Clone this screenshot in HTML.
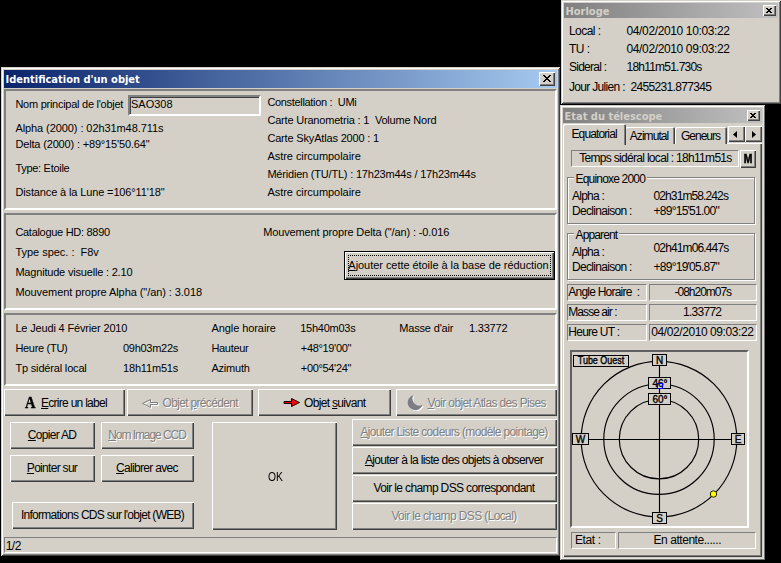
<!DOCTYPE html><html><head><meta charset="utf-8"><title>Identification d'un objet</title><style>
html,body{margin:0;padding:0;background:#000}
body{width:781px;height:563px;position:relative;overflow:hidden;font-family:"Liberation Sans",sans-serif;font-size:11px;color:#000}
div,span{position:absolute;box-sizing:border-box}
.win{background:#d4d0c8;box-shadow:inset 1px 1px 0 #d4d0c8,inset -1px -1px 0 #404040,inset 2px 2px 0 #fff,inset -2px -2px 0 #808080}
.cap{color:#fff;font-family:"DejaVu Sans Condensed","DejaVu Sans",sans-serif;font-weight:bold;font-size:11px;white-space:nowrap;overflow:hidden}
.cap span{left:1.5px;top:3px;line-height:13px}
.capa{background:linear-gradient(90deg,#0a246a,#a6caf0)}
.capi{background:linear-gradient(90deg,#808080,#c0c0c0);color:#d4d0c8}
.btn{background:#d4d0c8;box-shadow:inset 1px 1px 0 #fff,inset -1px -1px 0 #404040,inset -2px -2px 0 #808080;display:flex;align-items:center;justify-content:center;white-space:nowrap}
.btn span{position:static;flex:none}
.ms{font-size:12px;letter-spacing:-0.7px;padding-bottom:2px;padding-right:1px}
.dis{color:#808080;text-shadow:1px 1px 0 #fff}
.pnl{border:2px solid;border-color:#808080 #fff #fff #808080}
.low{border:1px solid;border-color:#808080 #fff #fff #808080}
.t{white-space:nowrap;line-height:13px}
.m,.md{white-space:nowrap;line-height:14px;font-size:12px}
.grp{border:1px solid #808080;box-shadow:1px 1px 0 #fff,inset 1px 1px 0 #fff}
.c{text-align:center}
</style></head><body>
<div class="win" style="left:1px;top:67px;width:559px;height:489px;"></div>
<div class="cap capa" style="left:4px;top:70px;width:553px;height:18px;"><span>Identification d'un objet</span></div>
<div class="btn" style="left:539px;top:72px;width:16px;height:14px;"><svg width="8" height="7" viewBox="0 0 8 7" shape-rendering="crispEdges" style="position:absolute;left:4px;top:3px"><path d="M0 0h2v1h1v1h2v-1h1v-1h2v1h-1v1h-1v1h-1v1h1v1h1v1h1v1h-2v-1h-1v-1h-2v1h-1v1h-2v-1h1v-1h1v-1h1v-1h-1v-1h-1v-1h-1z" fill="#000"/></svg></div>
<div class="pnl" style="left:4px;top:89px;width:553px;height:121px;"></div>
<div class="pnl" style="left:4px;top:213px;width:553px;height:97px;"></div>
<div class="pnl" style="left:4px;top:313px;width:553px;height:73px;"></div>
<span class="t" style="left:15.4px;top:98px;letter-spacing:-0.26px;">Nom principal de l'objet</span>
<div class="" style="left:128px;top:95px;width:133px;height:21px;border:2px solid;border-color:#808080 #fff #fff #808080;box-shadow:inset 1px 1px 0 #404040,inset -1px -1px 0 #d4d0c8"><span class="t" style="left:1px;top:1px">SAO308</span></div>
<span class="t" style="left:15.4px;top:122px;letter-spacing:-0.08px;">Alpha (2000) : 02h31m48.711s</span>
<span class="t" style="left:15.4px;top:138px;letter-spacing:-0.16px;">Delta (2000) : +89°15'50.64"</span>
<span class="t" style="left:15.4px;top:162px;letter-spacing:-0.29px;">Type: Etoile</span>
<span class="t" style="left:15.4px;top:186px;letter-spacing:-0.13px;">Distance à la Lune =106°11'18"</span>
<span class="t" style="left:267.4px;top:96px;letter-spacing:-0.32px;">Constellation :&nbsp; UMi</span>
<span class="t" style="left:267.4px;top:114px;letter-spacing:-0.19px;">Carte Uranometria : 1&nbsp; Volume Nord</span>
<span class="t" style="left:267.4px;top:132px;letter-spacing:-0.17px;">Carte SkyAtlas 2000 : 1</span>
<span class="t" style="left:267.4px;top:150px;letter-spacing:-0.04px;">Astre circumpolaire</span>
<span class="t" style="left:267.4px;top:168px;letter-spacing:-0.20px;">Méridien (TU/TL) : 17h23m44s / 17h23m44s</span>
<span class="t" style="left:267.4px;top:186px;letter-spacing:-0.04px;">Astre circumpolaire</span>
<span class="t" style="left:15.4px;top:226px;letter-spacing:-0.29px;">Catalogue HD: 8890</span>
<span class="t" style="left:15.4px;top:246px;letter-spacing:-0.02px;">Type spec. :&nbsp; F8v</span>
<span class="t" style="left:15.4px;top:266px;letter-spacing:-0.19px;">Magnitude visuelle : 2.10</span>
<span class="t" style="left:15.4px;top:286px;letter-spacing:-0.07px;">Mouvement propre Alpha ("/an) : 3.018</span>
<span class="t" style="left:263.2px;top:226px;letter-spacing:-0.13px;">Mouvement propre Delta ("/an) : -0.016</span>
<div class="btn" style="left:344px;top:251px;width:211px;height:29px;border:1px solid #000;padding:0 2px 2px 0"><span style="letter-spacing:-0.05px;"><u>A</u>jouter cette étoile à la base de réduction</span></div>
<div class="" style="left:348px;top:255px;width:203px;height:21px;border:1px dotted #000"></div>
<span class="t" style="left:15.4px;top:322px;letter-spacing:-0.16px;">Le Jeudi 4 Février 2010</span>
<span class="t" style="left:15.4px;top:342px;letter-spacing:-0.30px;">Heure (TU)</span>
<span class="t" style="left:15.4px;top:362px;letter-spacing:-0.17px;">Tp sidéral local</span>
<span class="t" style="left:123px;top:342px;letter-spacing:-0.28px;">09h03m22s</span>
<span class="t" style="left:123px;top:362px;letter-spacing:-0.17px;">18h11m51s</span>
<span class="t" style="left:211.4px;top:322px;letter-spacing:-0.07px;">Angle horaire</span>
<span class="t" style="left:211.4px;top:342px;letter-spacing:-0.31px;">Hauteur</span>
<span class="t" style="left:211.4px;top:362px;letter-spacing:-0.21px;">Azimuth</span>
<span class="t" style="left:300.2px;top:322px;letter-spacing:-0.25px;">15h40m03s</span>
<span class="t" style="left:300.8px;top:342px;letter-spacing:-0.33px;">+48°19'00"</span>
<span class="t" style="left:300.8px;top:362px;letter-spacing:-0.33px;">+00°54'24"</span>
<span class="t" style="left:399.2px;top:322px;letter-spacing:-0.16px;">Masse d'air</span>
<span class="t" style="left:469px;top:322px;letter-spacing:-0.21px;">1.33772</span>
<div class="btn" style="left:4px;top:389px;width:121px;height:27px;"></div>
<span style="left:24.5px;top:394.3px;font-family:'Liberation Serif',serif;font-weight:bold;font-size:16.5px;line-height:18px;transform:scaleX(.88);transform-origin:0 0;-webkit-text-stroke:0.45px #000">A</span>
<span class="m" style="left:41px;top:396px;letter-spacing:-0.72px;"><u>E</u>crire un label</span>
<div class="btn" style="left:127px;top:389px;width:126px;height:27px;"></div>
<svg style="position:absolute;left:141px;top:398px" width="20" height="12" viewBox="141 398 20 12"><path d="M143.500 404.500L151.500 400.500V403.500H158.500V405.500H151.500V408.500Z" fill="none" stroke="#fff"/><path d="M142.500 403.500L150.500 399.500V402.500H157.500V404.500H150.500V407.500Z" fill="none" stroke="#808080"/></svg>
<span class="m dis" style="left:162.5px;top:396px;letter-spacing:-0.67px;">Objet <u>p</u>récédent</span>
<div class="btn" style="left:258px;top:389px;width:133px;height:27px;"></div>
<svg style="position:absolute;left:282px;top:396px" width="20" height="13" viewBox="282 396 20 13"><path d="M284 401.500H291.500V398.500L299.500 402.500L291.500 406.500V403.500H284Z" fill="#f00" stroke="#000" stroke-width="1"/></svg>
<span class="m" style="left:304px;top:396px;letter-spacing:-0.67px;">Objet <u>s</u>uivant</span>
<div class="btn" style="left:396px;top:389px;width:161px;height:27px;"></div>
<svg style="position:absolute;left:405px;top:393px" width="22" height="20" viewBox="405 393 22 20"><path transform="translate(1,1)" d="M413.400 395.200A7.600 7.600 0 1 0 422.600 404.700A6.900 6.900 0 0 1 413.400 395.200Z" fill="#fff"/><path d="M413.400 395.200A7.600 7.600 0 1 0 422.600 404.700A6.900 6.900 0 0 1 413.400 395.200Z" fill="#7c7c84"/></svg>
<span class="m dis" style="left:427.5px;top:396px;letter-spacing:-0.63px;"><u>V</u>oir objet Atlas des Pises</span>
<div class="btn ms" style="left:10px;top:422px;width:85px;height:27px;"><span style="letter-spacing:-0.71px;"><u>C</u>opier AD</span></div>
<div class="btn ms dis" style="left:101px;top:422px;width:93px;height:27px;"><span style="letter-spacing:-1.06px;"><u>N</u>om Image CCD</span></div>
<div class="btn ms" style="left:10px;top:455px;width:85px;height:27px;"><span style="letter-spacing:-0.70px;"><u>P</u>ointer sur</span></div>
<div class="btn ms" style="left:101px;top:455px;width:93px;height:27px;"><span style="letter-spacing:-0.68px;"><u>C</u>alibrer avec</span></div>
<div class="btn ms" style="left:12px;top:502px;width:182px;height:27px;"><span style="letter-spacing:-0.72px;">Informations CDS sur l'objet (WEB)</span></div>
<div class="btn" style="left:212px;top:422px;width:125px;height:108px;"></div>
<span class="m" style="left:267.7px;top:470px;transform:scaleX(.86);transform-origin:0 0;">OK</span>
<div class="btn ms dis" style="left:352px;top:419px;width:205px;height:27px;"><span style="letter-spacing:-0.66px;"><u>A</u>jouter Liste codeurs (modèle pointage)</span></div>
<div class="btn ms" style="left:352px;top:447px;width:205px;height:27px;"><span style="letter-spacing:-0.63px;"><u>A</u>jouter à la liste des objets à observer</span></div>
<div class="btn ms" style="left:352px;top:475px;width:205px;height:27px;"><span style="letter-spacing:-0.64px;">Voir le champ DSS correspondant</span></div>
<div class="btn ms dis" style="left:352px;top:503px;width:205px;height:27px;"><span style="letter-spacing:-0.62px;">Voir le champ DSS (Local)</span></div>
<div class="low" style="left:4px;top:537px;width:553px;height:16px;"><span class="m" style="left:0.7px;top:1px;letter-spacing:-0.5px">1/2</span></div>
<div class="win" style="left:561px;top:0px;width:220px;height:104px;"></div>
<div class="cap capi" style="left:564px;top:3px;width:214px;height:15px;"><span style="top:2px">Horloge</span></div>
<div class="btn" style="left:763px;top:5px;width:13px;height:11px;"><svg width="6" height="5" viewBox="0 0 6 5" shape-rendering="crispEdges" style="position:absolute;left:3px;top:3px"><path d="M0 0h2v1h2v-1h2v1h-1v1h-1v1h1v1h1v1h-2v-1h-2v1h-2v-1h1v-1h1v-1h-1v-1h-1z" fill="#000"/></svg></div>
<span class="m" style="left:569px;top:24px;letter-spacing:-0.56px;">Local :</span>
<span class="md" style="left:626.5px;top:24px;letter-spacing:-0.37px;">04/02/2010 10:03:22</span>
<span class="m" style="left:569px;top:42px;letter-spacing:-0.56px;">TU :</span>
<span class="md" style="left:626.5px;top:42px;letter-spacing:-0.37px;">04/02/2010 09:03:22</span>
<span class="m" style="left:569px;top:60px;letter-spacing:-0.75px;">Sideral :</span>
<span class="md" style="left:626.5px;top:60px;letter-spacing:-0.78px;">18h11m51.730s</span>
<span class="m" style="left:569px;top:79.5px;letter-spacing:-0.68px;">Jour Julien :</span>
<span class="md" style="left:630.5px;top:79.5px;letter-spacing:-0.66px;">2455231.877345</span>
<div class="win" style="left:560px;top:105px;width:205px;height:455px;box-shadow:inset 1px 1px 0 #d4d0c8,inset -1px -1px 0 #707070,inset 2px 2px 0 #fff,inset -2px -2px 0 #e4e2dc"></div>
<div class="cap capi" style="left:563px;top:108px;width:199px;height:15px;"><span style="top:2px">Etat du télescope</span></div>
<div class="btn" style="left:747px;top:110px;width:13px;height:11px;"><svg width="6" height="5" viewBox="0 0 6 5" shape-rendering="crispEdges" style="position:absolute;left:3px;top:3px"><path d="M0 0h2v1h2v-1h2v1h-1v1h-1v1h1v1h1v1h-2v-1h-2v1h-2v-1h1v-1h1v-1h-1v-1h-1z" fill="#000"/></svg></div>
<div class="" style="left:563px;top:143px;width:199px;height:414px;box-shadow:inset 1px 1px 0 #fff,inset -1px -1px 0 #404040,inset -2px -2px 0 #808080"></div>
<div style="left:625px;top:127px;width:50px;height:17px;background:#d4d0c8;border-radius:2px 2px 0 0;box-shadow:inset 1px 1px 0 #fff,inset -1px 0 0 #404040,inset -2px 0 0 #808080"></div>
<span class="m" style="left:629.8px;top:128.5px;letter-spacing:-0.95px;z-index:3;">Azimutal</span>
<div style="left:675px;top:127px;width:52px;height:17px;background:#d4d0c8;border-radius:2px 2px 0 0;box-shadow:inset 1px 1px 0 #fff,inset -1px 0 0 #404040,inset -2px 0 0 #808080"></div>
<span class="m" style="left:681px;top:128.5px;letter-spacing:-1.01px;z-index:3;">Geneurs</span>
<div style="left:563px;top:124px;width:63px;height:21px;z-index:2;background:#d4d0c8;border-radius:2px 2px 0 0;box-shadow:inset 1px 1px 0 #fff,inset -1px 0 0 #404040,inset -2px 0 0 #808080"></div>
<span class="m" style="left:571.5px;top:127px;letter-spacing:-0.88px;z-index:3;">Equatorial</span>
<div class="btn" style="left:728px;top:126px;width:17px;height:16px;"><svg width="4" height="7" viewBox="0 0 4 7" style="display:block;margin-right:3px"><path d="M4 0V7L0 3.500Z" fill="#000"/></svg></div>
<div class="btn" style="left:745px;top:126px;width:17px;height:16px;"><svg width="4" height="7" viewBox="0 0 4 7" style="display:block"><path d="M0 0V7L4 3.500Z" fill="#000"/></svg></div>
<div class="low" style="left:571px;top:150px;width:168px;height:17px;"></div>
<span class="m" style="left:579.2px;top:150.5px;letter-spacing:-0.69px;">Temps sidéral local : 18h11m51s</span>
<div class="btn" style="left:740px;top:150px;width:16px;height:18px;"><span style="font-weight:bold;font-size:12px;transform:scaleX(.86);-webkit-text-stroke:0.6px #000;padding-right:1px">M</span></div>
<div class="grp" style="left:567px;top:177px;width:188px;height:47px;"></div>
<span style="left:574px;top:172px;width:73px;height:14px;background:#d4d0c8"></span>
<span class="m" style="left:575.5px;top:172px;letter-spacing:-0.81px;">Equinoxe 2000</span>
<span class="m" style="left:572px;top:189px;letter-spacing:-0.76px;">Alpha :</span>
<span class="md" style="left:653.5px;top:189px;letter-spacing:-0.89px;">02h31m58.242s</span>
<span class="m" style="left:572px;top:204px;letter-spacing:-0.69px;">Declinaison :</span>
<span class="md" style="left:653.5px;top:204px;letter-spacing:-0.74px;">+89°15'51.00"</span>
<div class="grp" style="left:567px;top:233px;width:188px;height:47px;"></div>
<span style="left:574px;top:228px;width:45px;height:14px;background:#d4d0c8"></span>
<span class="m" style="left:575.5px;top:228px;letter-spacing:-0.87px;">Apparent</span>
<span class="m" style="left:572px;top:245px;letter-spacing:-0.76px;">Alpha :</span>
<span class="md" style="left:653.5px;top:241px;letter-spacing:-0.86px;">02h41m06.447s</span>
<span class="m" style="left:572px;top:260px;letter-spacing:-0.69px;">Declinaison :</span>
<span class="md" style="left:653.5px;top:260px;letter-spacing:-0.74px;">+89°19'05.87"</span>
<div class="low" style="left:567px;top:284px;width:80px;height:17px;"></div>
<div class="low" style="left:649px;top:284px;width:108px;height:17px;"></div>
<span class="m" style="left:568.3px;top:285px;letter-spacing:-0.78px;">Angle Horaire&nbsp; :</span>
<span class="md" style="left:674.5px;top:285px;letter-spacing:-1.01px;">-08h20m07s</span>
<div class="low" style="left:567px;top:304px;width:80px;height:17px;"></div>
<div class="low" style="left:649px;top:304px;width:108px;height:17px;"></div>
<span class="m" style="left:568.3px;top:305px;letter-spacing:-0.94px;">Masse air :</span>
<span class="md" style="left:683px;top:305px;letter-spacing:-0.73px;">1.33772</span>
<div class="low" style="left:567px;top:324px;width:80px;height:17px;"></div>
<div class="low" style="left:649px;top:324px;width:108px;height:17px;"></div>
<span class="m" style="left:568.3px;top:325px;letter-spacing:-0.74px;">Heure UT :</span>
<span class="md" style="left:651.3px;top:325px;letter-spacing:-0.42px;">04/02/2010 09:03:22</span>
<div class="" style="left:570px;top:350px;width:179px;height:178px;border:2px solid;border-color:#606060 #fff #fff #606060;overflow:hidden"><svg width="175" height="174" viewBox="0 0 175 174" style="position:absolute;left:0;top:0;font-family:'Liberation Sans',sans-serif;font-size:10px">
<g fill="none" stroke="#000" stroke-width="1.150">
<circle cx="87" cy="87.19999999999999" r="77.800"/><circle cx="87" cy="87.19999999999999" r="55.200"/><circle cx="87" cy="87.19999999999999" r="39.700"/>
<path d="M87.5 8.5V166.5M8.5 87.5H166.5"/>
</g>
<g fill="#d4d0c8" stroke="#000">
<rect x="1.5" y="3.5" width="55" height="11"/><rect x="80.5" y="2.5" width="14" height="11"/><rect x="80.5" y="160.5" width="14" height="11"/><rect x="0.5" y="81.5" width="16" height="11"/><rect x="159.5" y="81.5" width="13" height="11"/><rect x="76.5" y="25.5" width="22" height="11"/><rect x="76.5" y="41.5" width="22" height="11"/>
</g>
<g fill="#000" stroke="#000" stroke-width="0.350" text-anchor="middle">
<text x="29" y="12" textLength="46.5" lengthAdjust="spacingAndGlyphs">Tube Ouest</text>
<text x="87.5" y="11.5">N</text>
<text x="87.5" y="169.5">S</text>
<text x="8.5" y="90.5">W</text>
<text x="166" y="90.5">E</text>
<text x="88" y="34.5">46°</text>
<text x="88" y="50.5">60°</text>
</g>
<rect x="85.5" y="31.5" width="5" height="5" fill="none" stroke="#00f"/>
<circle cx="141.5" cy="142" r="3.200" fill="#ff0" stroke="#202000" stroke-width="1"/>
</svg></div>
<div class="low" style="left:571px;top:532px;width:45px;height:17px;"></div>
<div class="low" style="left:618px;top:532px;width:138px;height:17px;"></div>
<span class="m" style="left:575px;top:532.5px;letter-spacing:-0.40px;">Etat :</span>
<span class="m" style="left:653.5px;top:532.5px;letter-spacing:-0.45px;">En attente......</span>
</body></html>
